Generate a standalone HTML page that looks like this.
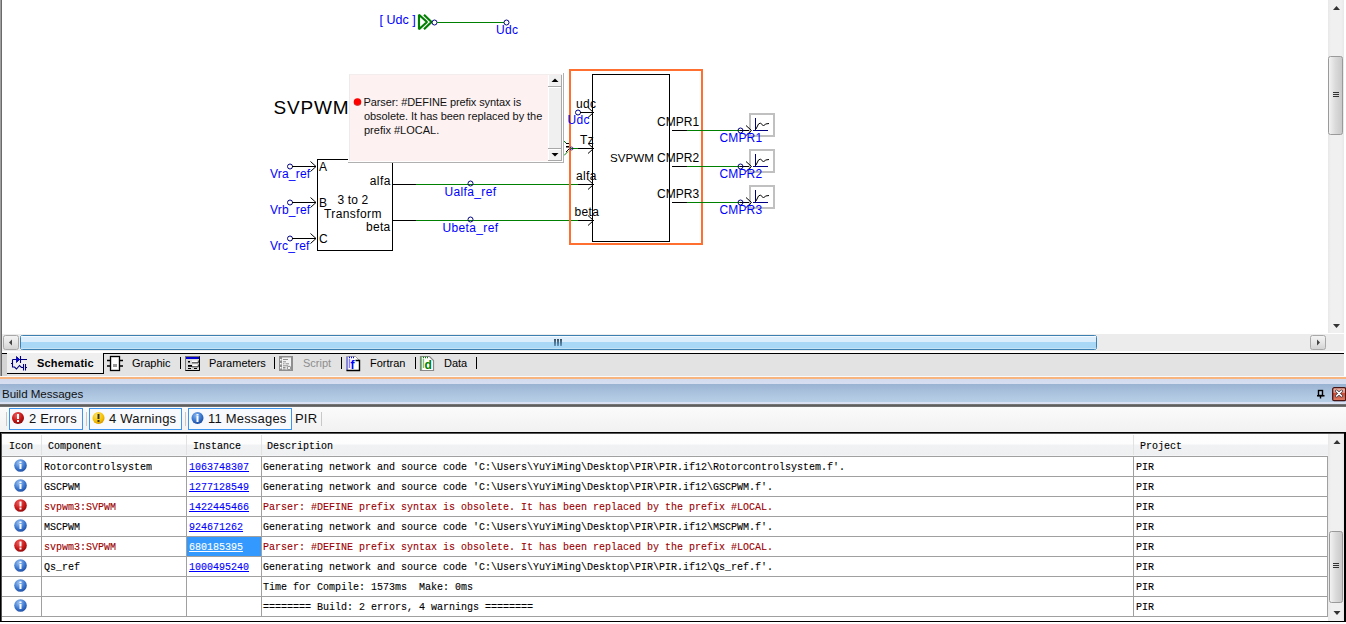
<!DOCTYPE html>
<html><head><meta charset="utf-8">
<style>
*{box-sizing:border-box;margin:0;padding:0}
html,body{width:1346px;height:624px;overflow:hidden;background:#fff;position:relative;font-family:"Liberation Sans",sans-serif}
.a{position:absolute}
svg text{font-family:"Liberation Sans",sans-serif}
.mono{font-family:"Liberation Mono",monospace;font-size:11px;letter-spacing:0;white-space:pre;transform:scaleX(0.90909);transform-origin:0 0;-webkit-text-stroke:0.12px currentColor}
</style></head><body>

<!-- left border of canvas pane -->
<div class="a" style="left:0;top:0;width:1px;height:376px;background:#a0a0a0;z-index:5"></div>
<div class="a" style="left:1px;top:0;width:1px;height:376px;background:#6a6a6a;z-index:5"></div>

<!-- schematic canvas -->
<svg class="a" style="left:0;top:0" width="1328" height="333" viewBox="0 0 1328 333">
<text x="379.5" y="23.8" font-size="12.5" fill="#0000ff" style="letter-spacing:0px" >[ Udc ]</text>
<polygon points="419,14.8 427,22 419,29.2" fill="none" stroke="#008000" stroke-width="2.2" stroke-linejoin="bevel"/>
<polyline points="424,14.8 431.5,22 424,29.2" fill="none" stroke="#008000" stroke-width="2.2" stroke-linejoin="bevel"/>
<circle cx="434.5" cy="22.5" r="2.5" fill="none" stroke="#000080" stroke-width="1"/>
<rect x="437" y="22" width="67" height="1" fill="#008000"/>
<circle cx="506.5" cy="22.5" r="2.5" fill="none" stroke="#000080" stroke-width="1"/>
<text x="496" y="33.5" font-size="12" fill="#0000ff" style="letter-spacing:0.35px" >Udc</text>
<text x="273.5" y="113.5" font-size="19" fill="#000" style="letter-spacing:0.8px" >SVPWM</text>
<rect x="317.5" y="159.5" width="75" height="91" fill="none" stroke="#000" stroke-width="1"/>
<circle cx="290" cy="166.5" r="2.5" fill="none" stroke="#000080" stroke-width="1"/>
<rect x="292" y="166" width="24" height="1" fill="#000"/>
<polyline points="310.5,161.5 316.0,166.5 310.5,171.5" fill="none" stroke="#000" stroke-width="1"/>
<text x="319" y="171" font-size="12" fill="#000" style="letter-spacing:0px" >A</text>
<text x="270" y="177.7" font-size="12" fill="#0000ff" style="letter-spacing:0.2px" >Vra_ref</text>
<circle cx="290" cy="202.5" r="2.5" fill="none" stroke="#000080" stroke-width="1"/>
<rect x="292" y="202" width="24" height="1" fill="#000"/>
<polyline points="310.5,197.5 316.0,202.5 310.5,207.5" fill="none" stroke="#000" stroke-width="1"/>
<text x="319" y="207" font-size="12" fill="#000" style="letter-spacing:0px" >B</text>
<text x="270" y="213.7" font-size="12" fill="#0000ff" style="letter-spacing:0.2px" >Vrb_ref</text>
<circle cx="290" cy="238.5" r="2.5" fill="none" stroke="#000080" stroke-width="1"/>
<rect x="292" y="238" width="24" height="1" fill="#000"/>
<polyline points="310.5,233.5 316.0,238.5 310.5,243.5" fill="none" stroke="#000" stroke-width="1"/>
<text x="319" y="243" font-size="12" fill="#000" style="letter-spacing:0px" >C</text>
<text x="270" y="249.7" font-size="12" fill="#0000ff" style="letter-spacing:0.2px" >Vrc_ref</text>
<text x="391" y="185" font-size="12" fill="#000" text-anchor="end" style="letter-spacing:0.5px" >alfa</text>
<text x="390.5" y="231" font-size="12" fill="#000" text-anchor="end" style="letter-spacing:0.3px" >beta</text>
<text x="337.5" y="204" font-size="12" fill="#000" style="letter-spacing:0.15px" >3 to 2</text>
<text x="324" y="217.5" font-size="12" fill="#000" style="letter-spacing:0.4px" >Transform</text>
<rect x="393" y="184" width="23" height="1" fill="#000"/>
<rect x="416" y="184" width="162" height="1" fill="#008000"/>
<rect x="578" y="184" width="16" height="1" fill="#000"/>
<polyline points="588,179.5 593.5,184.5 588,189.5" fill="none" stroke="#000" stroke-width="1"/>
<circle cx="470.5" cy="183.5" r="2.5" fill="none" stroke="#000080" stroke-width="1"/>
<text x="444.5" y="195.5" font-size="12" fill="#0000ff" style="letter-spacing:0.35px" >Ualfa_ref</text>
<rect x="393" y="220" width="23" height="1" fill="#000"/>
<rect x="416" y="220" width="162" height="1" fill="#008000"/>
<rect x="578" y="220" width="16" height="1" fill="#000"/>
<polyline points="588,215.5 593.5,220.5 588,225.5" fill="none" stroke="#000" stroke-width="1"/>
<circle cx="470.5" cy="219.5" r="2.5" fill="none" stroke="#000080" stroke-width="1"/>
<text x="442.5" y="231.5" font-size="12" fill="#0000ff" style="letter-spacing:0.35px" >Ubeta_ref</text>
<rect x="570" y="70" width="132" height="174" fill="none" stroke="#ff7030" stroke-width="2"/>
<rect x="592.5" y="74.5" width="77" height="167" fill="none" stroke="#000" stroke-width="1"/>
<circle cx="578" cy="112.5" r="2.5" fill="none" stroke="#000080" stroke-width="1"/>
<rect x="580" y="112" width="14" height="1" fill="#000"/>
<polyline points="588,107.5 593.5,112.5 588,117.5" fill="none" stroke="#000" stroke-width="1"/>
<text x="576" y="107.5" font-size="12" fill="#000" style="letter-spacing:0.35px" >udc</text>
<text x="567.5" y="123.5" font-size="12" fill="#0000ff" style="letter-spacing:0.35px" >Udc</text>
<rect x="571" y="148" width="7" height="1" fill="#008000"/>
<rect x="578" y="148" width="16" height="1" fill="#000"/>
<polyline points="588,143.5 593.5,148.5 588,153.5" fill="none" stroke="#000" stroke-width="1"/>
<text x="580" y="143.5" font-size="12" fill="#000" style="letter-spacing:0.35px" >Tz</text>
<polyline points="564,141 567,144" stroke="#008000" fill="none"/>
<polyline points="564,155.5 568,151.5" stroke="#008000" fill="none"/>
<rect x="566" y="143" width="3" height="1" fill="#000"/><rect x="566" y="146" width="3" height="1.5" fill="#000"/><polyline points="566,152 569,149" stroke="#000" fill="none"/>
<circle cx="571.5" cy="148.5" r="1.5" fill="none" stroke="#000080" stroke-width="0.8"/>
<text x="576" y="180" font-size="12" fill="#000" style="letter-spacing:0.35px" >alfa</text>
<text x="574.5" y="215.5" font-size="12" fill="#000" style="letter-spacing:0.35px" >beta</text>
<text x="610" y="162" font-size="11.6" fill="#000" style="letter-spacing:0px" >SVPWM</text>
<text x="657" y="125.5" font-size="12" fill="#000" style="letter-spacing:0.05px" >CMPR1</text>
<rect x="672" y="130" width="15" height="1" fill="#000"/>
<rect x="687" y="130" width="53" height="1" fill="#008000"/>
<rect x="740" y="130" width="11" height="1" fill="#000"/>
<circle cx="740.5" cy="130.5" r="2.5" fill="none" stroke="#000080" stroke-width="1"/>
<rect x="750" y="114" width="24" height="22" fill="none" stroke="#c0c0c0" stroke-width="2"/>
<polyline points="746,125.5 751.5,130.5 746,135.5" fill="none" stroke="#000" stroke-width="1"/>
<rect x="755" y="118" width="1" height="13" fill="#000080"/>
<rect x="753" y="130" width="15" height="1" fill="#000080"/>
<polyline points="756,129 758.5,124 760.5,123 763.5,126 765.5,124 769,123.5" fill="none" stroke="#000" stroke-width="1"/>
<text x="719.5" y="141.5" font-size="12" fill="#0000ff" style="letter-spacing:0.15px" >CMPR1</text>
<text x="657" y="161.5" font-size="12" fill="#000" style="letter-spacing:0.05px" >CMPR2</text>
<rect x="672" y="166" width="15" height="1" fill="#000"/>
<rect x="687" y="166" width="53" height="1" fill="#008000"/>
<rect x="740" y="166" width="11" height="1" fill="#000"/>
<circle cx="740.5" cy="166.5" r="2.5" fill="none" stroke="#000080" stroke-width="1"/>
<rect x="750" y="150" width="24" height="22" fill="none" stroke="#c0c0c0" stroke-width="2"/>
<polyline points="746,161.5 751.5,166.5 746,171.5" fill="none" stroke="#000" stroke-width="1"/>
<rect x="755" y="154" width="1" height="13" fill="#000080"/>
<rect x="753" y="166" width="15" height="1" fill="#000080"/>
<polyline points="756,165 758.5,160 760.5,159 763.5,162 765.5,160 769,159.5" fill="none" stroke="#000" stroke-width="1"/>
<text x="719.5" y="177.5" font-size="12" fill="#0000ff" style="letter-spacing:0.15px" >CMPR2</text>
<text x="657" y="197.5" font-size="12" fill="#000" style="letter-spacing:0.05px" >CMPR3</text>
<rect x="672" y="202" width="15" height="1" fill="#000"/>
<rect x="687" y="202" width="53" height="1" fill="#008000"/>
<rect x="740" y="202" width="11" height="1" fill="#000"/>
<circle cx="740.5" cy="202.5" r="2.5" fill="none" stroke="#000080" stroke-width="1"/>
<rect x="750" y="186" width="24" height="22" fill="none" stroke="#c0c0c0" stroke-width="2"/>
<polyline points="746,197.5 751.5,202.5 746,207.5" fill="none" stroke="#000" stroke-width="1"/>
<rect x="755" y="190" width="1" height="13" fill="#000080"/>
<rect x="753" y="202" width="15" height="1" fill="#000080"/>
<polyline points="756,201 758.5,196 760.5,195 763.5,198 765.5,196 769,195.5" fill="none" stroke="#000" stroke-width="1"/>
<text x="719.5" y="213.5" font-size="12" fill="#0000ff" style="letter-spacing:0.15px" >CMPR3</text>
</svg>

<!-- tooltip -->
<div class="a" style="left:348px;top:73px;width:216px;height:90px;background:#fff"></div>
<div class="a" style="left:349px;top:74px;width:213px;height:87px;background:#fdf1f1;border-left:1px solid #ebebeb;border-top:1px solid #f3eded"></div>
<div class="a" style="left:563px;top:73px;width:1px;height:90px;background:#b0b0b0"></div>
<div class="a" style="left:348px;top:162px;width:216px;height:1px;background:#b0b0b0"></div>
<div class="a" style="left:349px;top:161px;width:214px;height:1px;background:#fff"></div>
<svg class="a" style="left:548px;top:75px" width="14" height="86">
 <rect x="0" y="0" width="14" height="86" fill="#f0f0f0"/>
 <rect x="0" y="0" width="1" height="86" fill="#fff"/>
 <rect x="13" y="0" width="1" height="86" fill="#a8a8a8"/>
 <rect x="0" y="11" width="13" height="1" fill="#a8a8a8"/>
 <rect x="0" y="12" width="13" height="1" fill="#fff"/>
 <rect x="0" y="73" width="13" height="1" fill="#a8a8a8"/>
 <rect x="0" y="74" width="13" height="1" fill="#fff"/>
 <rect x="0" y="85" width="13" height="1" fill="#a8a8a8"/>
 <polygon points="3.5,7 7,3.5 10.5,7" fill="#000"/>
 <polygon points="3.5,78 7,81.5 10.5,78" fill="#000"/>
</svg>
<svg class="a" style="left:349px;top:74px" width="200" height="87">
 <circle cx="8.5" cy="28" r="3.8" fill="#ff0000"/>
 <path d="M5,30 Q8,33 12,30" stroke="#a06060" stroke-width="0.8" fill="none" opacity="0.6"/>
 <g font-family="Liberation Sans" font-size="11" fill="#111">
  <text x="14.5" y="32" style="letter-spacing:-0.1px">Parser: #DEFINE prefix syntax is</text>
  <text x="15" y="46" style="letter-spacing:-0.06px">obsolete. It has been replaced by the</text>
  <text x="15" y="60">prefix #LOCAL.</text>
 </g>
</svg>

<!-- vertical scrollbar (canvas) -->
<div class="a" style="left:1328px;top:0;width:16px;height:333px;background:linear-gradient(90deg,#e8e8e8,#f0f0f0 3px,#f0f0f0 13px,#e8e8e8)"></div>
<svg class="a" style="left:1328px;top:0" width="16" height="333">
 <polygon points="5,10 8.5,6 12,10" fill="#333"/>
 <polygon points="5,324 8.5,328 12,324" fill="#333"/>
 <rect x="0.5" y="56.5" width="14" height="78" rx="2" fill="url(#vthumb)" stroke="#9a9a9a"/>
 <rect x="5" y="92" width="6" height="1" fill="#333"/><rect x="5" y="94" width="6" height="1" fill="#333"/><rect x="5" y="96" width="6" height="1" fill="#333"/>
 <defs><linearGradient id="vthumb" x1="0" x2="1" y1="0" y2="0"><stop offset="0" stop-color="#f4f4f4"/><stop offset="0.5" stop-color="#dadada"/><stop offset="1" stop-color="#c8c8c8"/></linearGradient></defs>
</svg>

<!-- horizontal scrollbar -->
<div class="a" style="left:2px;top:333px;width:1342px;height:20px;background:#fff"></div>
<div class="a" style="left:2px;top:334px;width:1342px;height:17px;background:#ececec"></div>
<svg class="a" style="left:0;top:333px" width="1346" height="20">
 <defs>
  <linearGradient id="btn" x1="0" x2="0" y1="0" y2="1"><stop offset="0" stop-color="#f4f4f4"/><stop offset="0.5" stop-color="#e6e6e6"/><stop offset="1" stop-color="#d2d2d2"/></linearGradient>
 </defs>
 <rect x="3.5" y="2.5" width="15" height="14" rx="2" fill="url(#btn)" stroke="#a8a8a8"/>
 <polygon points="9,9.5 12,6.5 12,12.5" fill="#444"/>
 <rect x="1310.5" y="2.5" width="15" height="14" rx="2" fill="url(#btn)" stroke="#a8a8a8"/>
 <polygon points="1320,9.5 1317,6.5 1317,12.5" fill="#444"/>
 <rect x="20.5" y="2.5" width="1076" height="14" rx="2" fill="#a8d8f5" stroke="#3c7fb1"/>
 <rect x="21" y="3" width="1075" height="1" fill="#f4faff"/>
 <rect x="21" y="4" width="1075" height="5" fill="#dcedfb"/>
 <defs><linearGradient id="grip" x1="0" x2="0" y1="0" y2="1"><stop offset="0" stop-color="#10283c"/><stop offset="1" stop-color="#5a8cb0"/></linearGradient></defs><rect x="554.2" y="6" width="1.6" height="7" fill="url(#grip)"/><rect x="557.2" y="6" width="1.6" height="7" fill="url(#grip)"/><rect x="560.2" y="6" width="1.6" height="7" fill="url(#grip)"/><rect x="21" y="15" width="1075" height="1" fill="#c4e2f4"/>
</svg>

<!-- tab bar -->
<div class="a" style="left:2px;top:353px;width:1342px;height:1px;background:#000"></div>
<div class="a" style="left:2px;top:354px;width:1342px;height:22px;background:#e3e3e3"></div>
<div class="a" style="left:0;top:376px;width:1346px;height:1px;background:#fafafa"></div>
<div class="a" style="left:7px;top:353px;width:97px;height:21px;background:#efefef;border-right:1px solid #000;border-bottom:1px solid #000"></div>
<div class="a" style="left:2px;top:354px;width:5px;height:22px;background:#d4d4d4"></div>
<svg class="a" style="left:0;top:353px" width="490" height="21">
 <!-- schematic icon -->
 <g stroke="#000080" fill="none" stroke-width="1.1">
  <path d="M12.5,6.5 H27 M12.5,6.5 V14.5 M11,10.5 H12.5 M20.5,3 V10 M12.5,14 H14.5 L16.5,16 L19.5,12.5 L21.5,14.5 H23.5 M23.5,11 V17.5 M25.5,11 V17.5 M25.5,14.5 H27"/>
  <polygon points="16.5,3.5 19.5,6.5 16.5,9.5" fill="#0000ff" stroke-width="0.8"/>
 </g>
 <!-- graphic icon -->
 <g>
  <rect x="110.5" y="3.5" width="9" height="14" fill="#fff" stroke="#000" stroke-width="1.3"/>
  <rect x="111.5" y="4.5" width="7" height="12" fill="none" stroke="#bbb" stroke-dasharray="1,1" stroke-width="0.8"/>
  <path d="M107,7.5 H110 M120,7.5 H123 M107,13 H110 M120,13 H123" stroke="#000" stroke-width="1.3"/>
  <rect x="113" y="11" width="4" height="3" fill="#999"/>
 </g>
 <rect x="180" y="4" width="1" height="12" fill="#000"/>
 <!-- parameters icon -->
 <g>
  <rect x="185.5" y="3.5" width="14" height="14" fill="#d8d8d8" stroke="#777"/>
  <path d="M199.5,3.5 V17.5 H185.5" stroke="#000" fill="none"/>
  <rect x="186" y="4" width="13" height="2" fill="#0000d0"/>
  <rect x="188" y="8" width="2" height="1.5" fill="#000"/><rect x="192" y="7.5" width="6" height="2" fill="#fff"/><path d="M192,9.8 H198.3 V7.5" stroke="#000" stroke-width="0.8" fill="none"/>
  <rect x="188" y="12" width="4" height="1.8" fill="#000"/><rect x="192.5" y="11.5" width="5.5" height="2" fill="#fff"/><path d="M192,13.8 H198.3 V11.5" stroke="#000" stroke-width="0.8" fill="none"/>
  <rect x="188" y="15" width="3" height="1" fill="#000"/><rect x="194" y="15" width="3" height="1" fill="#000"/>
 </g>
 <rect x="274" y="4" width="1" height="12" fill="#000"/>
 <!-- script icon (disabled) -->
 <g>
  <rect x="279" y="3" width="14" height="15" fill="#8e8e8e"/>
  <rect x="282" y="4.5" width="9" height="12" fill="#f2f2f2"/>
  <rect x="280" y="6" width="1.5" height="1.5" fill="#fff"/><rect x="280" y="10" width="1.5" height="1.5" fill="#fff"/><rect x="280" y="14" width="1.5" height="1.5" fill="#fff"/>
  <path d="M283,6.5 H288 M283,8.8 H286 M283,10.8 H284.5 M285.5,10.8 H289 M283,12.8 H288 M283,14.5 H285.5 M283,16 H285.5" stroke="#8e8e8e" stroke-width="1"/>
  <circle cx="289" cy="15" r="1.8" fill="none" stroke="#8e8e8e" stroke-width="1"/>
 </g>
 <rect x="341" y="4" width="1" height="12" fill="#000"/>
 <!-- fortran icon -->
 <g>
  <path d="M346.5,3.5 H355.5 L359.5,7.5 V17.5 H346.5 Z" fill="#fff" stroke="#888" stroke-width="0.8"/>
  <path d="M355.5,7.5 H359.5 V17.5 H346.5" stroke="#000" stroke-width="1.4" fill="none"/>
  <path d="M347.5,4.5 V17" stroke="#0000ff" stroke-width="1.3" stroke-dasharray="1,1"/>
  <path d="M349,4.5 H355" stroke="#0000ff" stroke-width="1.3" stroke-dasharray="1,1"/>
  <path d="M349.5,6.5 V15" stroke="#0000ff" stroke-width="1.3" stroke-dasharray="1,1"/>
  <text x="350.5" y="15.8" font-family="Liberation Serif" font-weight="bold" font-size="12" fill="#0000ff">f</text>
 </g>
 <rect x="415" y="4" width="1" height="12" fill="#000"/>
 <!-- data icon -->
 <g>
  <path d="M420.5,3.5 H429.5 L433.5,7.5 V17.5 H420.5 Z" fill="#fff" stroke="#888" stroke-width="1.2"/>
  <path d="M421.5,4.5 V17" stroke="#008000" stroke-width="1.3" stroke-dasharray="1,1"/>
  <path d="M423,4.5 H429" stroke="#008000" stroke-width="1.3" stroke-dasharray="1,1"/>
  <path d="M423.5,6.5 V15" stroke="#008000" stroke-width="1.3" stroke-dasharray="1,1"/>
  <text x="424.5" y="16" font-family="Liberation Serif" font-weight="bold" font-size="12" fill="#008000">d</text>
 </g>
 <rect x="476" y="4" width="1" height="12" fill="#000"/>
 <g font-family="Liberation Sans" font-size="11" fill="#000">
  <text x="37" y="13.7" font-weight="bold" style="letter-spacing:0.2px">Schematic</text>
  <text x="132" y="13.7">Graphic</text>
  <text x="209" y="13.7">Parameters</text>
  <text x="303" y="13.7" fill="#8d8d8d">Script</text>
  <text x="370" y="13.7">Fortran</text>
  <text x="444" y="13.7">Data</text>
 </g>
</svg>

<!-- orange separator -->
<div class="a" style="left:0;top:377px;width:1346px;height:2px;background:#f7b47e"></div>

<!-- title bar -->
<div class="a" style="left:0;top:379px;width:1346px;height:26px;background:linear-gradient(#d3dcef 0,#d6def0 5px,#9ab3d2 5px,#a9c1dc 13px,#b8cfe7 23px,#d8e0f2 23px,#dce3f3 25px)"></div>
<div class="a" style="left:2px;top:387px;font-size:11.6px;color:#111;line-height:14px;letter-spacing:-0.05px">Build Messages</div>
<svg class="a" style="left:1310px;top:382px" width="36" height="22">
 <defs><linearGradient id="cls" x1="0" x2="0" y1="0" y2="1"><stop offset="0" stop-color="#f4b8a8"/><stop offset="0.4" stop-color="#e68c78"/><stop offset="0.45" stop-color="#cc4a30"/><stop offset="1" stop-color="#e08068"/></linearGradient></defs>
 <rect x="8.5" y="8.5" width="4" height="5" fill="#b8cce4" stroke="#000" stroke-width="1.4"/>
 <path d="M7,13.8 H14.5 M10.5,14 V16.5" stroke="#000" stroke-width="1.4" fill="none"/>
 <rect x="22.7" y="5.7" width="13" height="13" rx="1.5" fill="url(#cls)" stroke="#4a1414" stroke-width="1.3"/>
 <path d="M26.5,9 L31.5,14 M31.5,9 L26.5,14" stroke="#3a3a4a" stroke-width="3" stroke-linecap="round"/>
 <path d="M26.5,9 L31.5,14 M31.5,9 L26.5,14" stroke="#fff" stroke-width="1.6" stroke-linecap="round"/>
</svg>
<div class="a" style="left:0;top:404px;width:1346px;height:3px;background:linear-gradient(#808080,#5e5e5e 50%,#7a7a7a)"></div>

<!-- filter toolbar -->
<div class="a" style="left:0;top:407px;width:1346px;height:25px;background:linear-gradient(#fbfbfb,#f1f1f1)"></div>
<svg class="a" style="left:0;top:407px" width="330" height="25">
 <defs>
  <radialGradient id="gr" cx="0.4" cy="0.3" r="0.7"><stop offset="0" stop-color="#f26060"/><stop offset="0.6" stop-color="#c81818"/><stop offset="1" stop-color="#8c0a0a"/></radialGradient>
  <radialGradient id="gy" cx="0.4" cy="0.3" r="0.7"><stop offset="0" stop-color="#ffe46a"/><stop offset="0.7" stop-color="#f5c000"/><stop offset="1" stop-color="#d89800"/></radialGradient>
  <radialGradient id="gb" cx="0.4" cy="0.3" r="0.7"><stop offset="0" stop-color="#8ab8f0"/><stop offset="0.6" stop-color="#3c78d0"/><stop offset="1" stop-color="#1c4ca0"/></radialGradient>
 </defs>
 <rect x="6" y="5" width="1" height="14" fill="#c8c8c8"/>
 <rect x="86" y="5" width="1" height="14" fill="#c8c8c8"/>
 <rect x="185" y="5" width="1" height="14" fill="#c8c8c8"/>
 <rect x="321" y="5" width="1" height="14" fill="#c8c8c8"/>
 <rect x="9.5" y="1.5" width="73" height="21" fill="#f7f9fc" stroke="#3d94ef"/>
 <rect x="89.5" y="1.5" width="92" height="21" fill="#f7f9fc" stroke="#3d94ef"/>
 <rect x="188.5" y="1.5" width="103" height="21" fill="#f7f9fc" stroke="#3d94ef"/>
 <circle cx="18" cy="11" r="6" fill="url(#gr)"/>
 <rect x="17" y="7" width="2" height="5" fill="#fff"/><rect x="17" y="13" width="2" height="2" fill="#fff"/>
 <circle cx="98.5" cy="11" r="6" fill="url(#gy)"/>
 <rect x="97.5" y="7" width="2" height="5" fill="#333"/><rect x="97.5" y="13" width="2" height="2" fill="#333"/>
 <circle cx="197.5" cy="11" r="6" fill="url(#gb)"/>
 <rect x="196.5" y="9" width="2" height="6" fill="#fff"/><rect x="196.5" y="7" width="2" height="1.5" fill="#fff"/>
 <g font-family="Liberation Sans" font-size="13" fill="#111" style="letter-spacing:0.2px">
  <text x="29" y="15.8">2 Errors</text>
  <text x="109" y="15.8">4 Warnings</text>
  <text x="208" y="15.8">11 Messages</text>
  <text x="295" y="15.8">PIR</text>
 </g>
</svg>

<!-- table -->
<div class="a" style="left:0;top:432px;width:1346px;height:192px;background:#fff"></div>
<div id="tbl"><div class="a" style="left:0;top:432px;width:1346px;height:1px;background:#000"></div>
<div class="a" style="left:0;top:433px;width:1346px;height:1px;background:#555"></div>
<div class="a" style="left:0;top:432px;width:1px;height:190px;background:#000"></div>
<div class="a" style="left:1px;top:433px;width:1px;height:188px;background:#555"></div>
<div class="a" style="left:1344px;top:432px;width:2px;height:190px;background:#000"></div>
<div class="a" style="left:0;top:621px;width:1346px;height:1px;background:#000"></div>
<div class="a" style="left:0;top:622px;width:1346px;height:2px;background:#fff"></div>
<div class="a" style="left:2px;top:434px;width:1326px;height:22px;background:linear-gradient(#fefefe 0,#fdfdfd 10px,#f1f2f4 11px,#eef0f2 21px,#fafafa 22px)"></div>
<div class="a" style="left:41px;top:435px;width:1px;height:20px;background:#e2e2e2"></div>
<div class="a" style="left:186px;top:435px;width:1px;height:20px;background:#e2e2e2"></div>
<div class="a" style="left:261px;top:435px;width:1px;height:20px;background:#e2e2e2"></div>
<div class="a" style="left:1133px;top:435px;width:1px;height:20px;background:#e2e2e2"></div>
<div class="a" style="left:2px;top:456px;width:1326px;height:1px;background:#a0a0a0"></div>
<div class="a mono" style="left:9px;top:441px;line-height:10px;height:10px;color:#000">Icon</div>
<div class="a mono" style="left:48px;top:441px;line-height:10px;height:10px;color:#000">Component</div>
<div class="a mono" style="left:193px;top:441px;line-height:10px;height:10px;color:#000">Instance</div>
<div class="a mono" style="left:267px;top:441px;line-height:10px;height:10px;color:#000">Description</div>
<div class="a mono" style="left:1140px;top:441px;line-height:10px;height:10px;color:#000">Project</div>
<div class="a" style="left:2px;top:476px;width:1326px;height:1px;background:#a0a0a0"></div>
<div class="a mono" style="left:44px;top:461px;line-height:12px;color:#000">Rotorcontrolsystem</div>
<div class="a mono" style="left:189px;top:461px;line-height:12px;color:#0000ff;text-decoration:underline">1063748307</div>
<div class="a mono" style="left:263px;top:461px;line-height:12px;color:#000">Generating network and source code &#x27;C:\Users\YuYiMing\Desktop\PIR\PIR.if12\Rotorcontrolsystem.f&#x27;.</div>
<div class="a mono" style="left:1136px;top:461px;line-height:12px;color:#000">PIR</div>
<svg class="a" style="left:13px;top:458px" width="16" height="16"><circle cx="7.5" cy="7.5" r="6.3" fill="url(#gb2)"/><rect x="6.5" y="6" width="2" height="5" fill="#fff"/><rect x="6.5" y="3.5" width="2" height="1.5" fill="#fff"/></svg>
<div class="a" style="left:2px;top:496px;width:1326px;height:1px;background:#a0a0a0"></div>
<div class="a mono" style="left:44px;top:481px;line-height:12px;color:#000">GSCPWM</div>
<div class="a mono" style="left:189px;top:481px;line-height:12px;color:#0000ff;text-decoration:underline">1277128549</div>
<div class="a mono" style="left:263px;top:481px;line-height:12px;color:#000">Generating network and source code &#x27;C:\Users\YuYiMing\Desktop\PIR\PIR.if12\GSCPWM.f&#x27;.</div>
<div class="a mono" style="left:1136px;top:481px;line-height:12px;color:#000">PIR</div>
<svg class="a" style="left:13px;top:478px" width="16" height="16"><circle cx="7.5" cy="7.5" r="6.3" fill="url(#gb2)"/><rect x="6.5" y="6" width="2" height="5" fill="#fff"/><rect x="6.5" y="3.5" width="2" height="1.5" fill="#fff"/></svg>
<div class="a" style="left:2px;top:516px;width:1326px;height:1px;background:#a0a0a0"></div>
<div class="a mono" style="left:44px;top:501px;line-height:12px;color:#9a0000">svpwm3:SVPWM</div>
<div class="a mono" style="left:189px;top:501px;line-height:12px;color:#0000ff;text-decoration:underline">1422445466</div>
<div class="a mono" style="left:263px;top:501px;line-height:12px;color:#9a0000">Parser: #DEFINE prefix syntax is obsolete. It has been replaced by the prefix #LOCAL.</div>
<div class="a mono" style="left:1136px;top:501px;line-height:12px;color:#000">PIR</div>
<svg class="a" style="left:13px;top:498px" width="16" height="16"><circle cx="7.5" cy="7.5" r="6.3" fill="url(#gr2)"/><rect x="6.5" y="3.5" width="2" height="5" fill="#fff"/><rect x="6.5" y="9.5" width="2" height="2" fill="#fff"/></svg>
<div class="a" style="left:2px;top:536px;width:1326px;height:1px;background:#a0a0a0"></div>
<div class="a mono" style="left:44px;top:521px;line-height:12px;color:#000">MSCPWM</div>
<div class="a mono" style="left:189px;top:521px;line-height:12px;color:#0000ff;text-decoration:underline">924671262</div>
<div class="a mono" style="left:263px;top:521px;line-height:12px;color:#000">Generating network and source code &#x27;C:\Users\YuYiMing\Desktop\PIR\PIR.if12\MSCPWM.f&#x27;.</div>
<div class="a mono" style="left:1136px;top:521px;line-height:12px;color:#000">PIR</div>
<svg class="a" style="left:13px;top:518px" width="16" height="16"><circle cx="7.5" cy="7.5" r="6.3" fill="url(#gb2)"/><rect x="6.5" y="6" width="2" height="5" fill="#fff"/><rect x="6.5" y="3.5" width="2" height="1.5" fill="#fff"/></svg>
<div class="a" style="left:2px;top:556px;width:1326px;height:1px;background:#a0a0a0"></div>
<div class="a" style="left:187px;top:537px;width:74px;height:19px;background:#3399ff"></div>
<div class="a mono" style="left:44px;top:541px;line-height:12px;color:#9a0000">svpwm3:SVPWM</div>
<div class="a mono" style="left:189px;top:541px;line-height:12px;color:#fff;text-decoration:underline">680185395</div>
<div class="a mono" style="left:263px;top:541px;line-height:12px;color:#9a0000">Parser: #DEFINE prefix syntax is obsolete. It has been replaced by the prefix #LOCAL.</div>
<div class="a mono" style="left:1136px;top:541px;line-height:12px;color:#000">PIR</div>
<svg class="a" style="left:13px;top:538px" width="16" height="16"><circle cx="7.5" cy="7.5" r="6.3" fill="url(#gr2)"/><rect x="6.5" y="3.5" width="2" height="5" fill="#fff"/><rect x="6.5" y="9.5" width="2" height="2" fill="#fff"/></svg>
<div class="a" style="left:2px;top:576px;width:1326px;height:1px;background:#a0a0a0"></div>
<div class="a mono" style="left:44px;top:561px;line-height:12px;color:#000">Qs_ref</div>
<div class="a mono" style="left:189px;top:561px;line-height:12px;color:#0000ff;text-decoration:underline">1000495240</div>
<div class="a mono" style="left:263px;top:561px;line-height:12px;color:#000">Generating network and source code &#x27;C:\Users\YuYiMing\Desktop\PIR\PIR.if12\Qs_ref.f&#x27;.</div>
<div class="a mono" style="left:1136px;top:561px;line-height:12px;color:#000">PIR</div>
<svg class="a" style="left:13px;top:558px" width="16" height="16"><circle cx="7.5" cy="7.5" r="6.3" fill="url(#gb2)"/><rect x="6.5" y="6" width="2" height="5" fill="#fff"/><rect x="6.5" y="3.5" width="2" height="1.5" fill="#fff"/></svg>
<div class="a" style="left:2px;top:596px;width:1326px;height:1px;background:#a0a0a0"></div>
<div class="a mono" style="left:263px;top:581px;line-height:12px;color:#000">Time for Compile: 1573ms  Make: 0ms</div>
<div class="a mono" style="left:1136px;top:581px;line-height:12px;color:#000">PIR</div>
<svg class="a" style="left:13px;top:578px" width="16" height="16"><circle cx="7.5" cy="7.5" r="6.3" fill="url(#gb2)"/><rect x="6.5" y="6" width="2" height="5" fill="#fff"/><rect x="6.5" y="3.5" width="2" height="1.5" fill="#fff"/></svg>
<div class="a" style="left:2px;top:616px;width:1326px;height:1px;background:#a0a0a0"></div>
<div class="a mono" style="left:263px;top:601px;line-height:12px;color:#000">======== Build: 2 errors, 4 warnings ========</div>
<div class="a mono" style="left:1136px;top:601px;line-height:12px;color:#000">PIR</div>
<svg class="a" style="left:13px;top:598px" width="16" height="16"><circle cx="7.5" cy="7.5" r="6.3" fill="url(#gb2)"/><rect x="6.5" y="6" width="2" height="5" fill="#fff"/><rect x="6.5" y="3.5" width="2" height="1.5" fill="#fff"/></svg>
<div class="a" style="left:41px;top:457px;width:1px;height:160px;background:#a0a0a0"></div>
<div class="a" style="left:186px;top:457px;width:1px;height:160px;background:#a0a0a0"></div>
<div class="a" style="left:261px;top:457px;width:1px;height:160px;background:#a0a0a0"></div>
<div class="a" style="left:1133px;top:457px;width:1px;height:160px;background:#a0a0a0"></div>
<div class="a" style="left:1327px;top:457px;width:1px;height:160px;background:#a0a0a0"></div>
<svg class="a" width="0" height="0" style="left:0;top:0"><defs><radialGradient id="gr2" cx="0.4" cy="0.3" r="0.75"><stop offset="0" stop-color="#f26060"/><stop offset="0.6" stop-color="#c81818"/><stop offset="1" stop-color="#8c0a0a"/></radialGradient><radialGradient id="gb2" cx="0.4" cy="0.3" r="0.75"><stop offset="0" stop-color="#9cc4f4"/><stop offset="0.6" stop-color="#3c78d0"/><stop offset="1" stop-color="#1c4ca0"/></radialGradient></defs></svg>
<div class="a" style="left:1328px;top:434px;width:16px;height:187px;background:linear-gradient(90deg,#e8e8e8,#f0f0f0 3px,#f0f0f0 13px,#e8e8e8)"></div>
<svg class="a" style="left:1328px;top:434px" width="16" height="187">
 <polygon points="5.5,10 9,6 12.5,10" fill="#333"/>
 <polygon points="5.5,177 9,181 12.5,177" fill="#333"/>
 <rect x="1.5" y="97.5" width="13" height="71" rx="2" fill="url(#vthumb2)" stroke="#9a9a9a"/>
 <rect x="5" y="129" width="6" height="1" fill="#333"/><rect x="5" y="131" width="6" height="1" fill="#333"/><rect x="5" y="133" width="6" height="1" fill="#333"/>
 <defs><linearGradient id="vthumb2" x1="0" x2="1" y1="0" y2="0"><stop offset="0" stop-color="#f4f4f4"/><stop offset="0.5" stop-color="#dadada"/><stop offset="1" stop-color="#c8c8c8"/></linearGradient></defs>
</svg></div><!--/tbl-->
</body></html>
